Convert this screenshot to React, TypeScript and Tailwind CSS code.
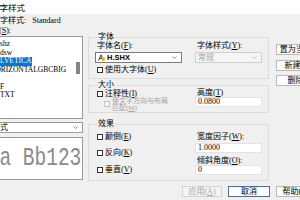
import React from "react";

const ui = "font-['Liberation_Serif','Noto_Sans_CJK_SC',serif]";

function Check({ disabled }: { disabled?: boolean }) {
  return (
    <span
      className={
        disabled
          ? "inline-block w-[6px] h-[6px] shrink-0 border border-[#c4c4c4] bg-[#f7f7f7]"
          : "inline-block w-[6px] h-[6px] shrink-0 border border-[#333333] bg-white"
      }
    />
  );
}

function Arrow({ color = "#707070" }: { color?: string }) {
  return (
    <svg width="5" height="3" viewBox="0 0 5 3" className="shrink-0">
      <polyline points="0.5,0.5 2.5,2.5 4.5,0.5" fill="none" stroke={color} strokeWidth="0.8" />
    </svg>
  );
}

function ShxIcon() {
  return (
    <svg width="7" height="7" viewBox="0 0 7 7" className="shrink-0">
      <path d="M0.5 6.5 L3 0.8 L5.5 6.5 M1.5 4.4 H4.5" fill="none" stroke="#222" strokeWidth="0.9" />
      <path d="M4 3.5 L6.8 3.5 L6.8 6.8 L4 6.8 Z" fill="#f2b705" />
    </svg>
  );
}

function Key({ k }: { k: string }) {
  return <span className="underline underline-offset-[1px]">{k}</span>;
}

const styles = ["HZshz", "HZdsw", "HELVETICA", "HORIZONTALGBCBIG", "HZ", "HZF", "HZTXT", "", ""];

function Btn({ children, w, dim, focus }: { children: React.ReactNode; w: string; dim?: boolean; focus?: boolean }) {
  return (
    <div
      className={[
        "h-[11px] shrink-0 flex items-center justify-center whitespace-nowrap leading-[8px] border",
        w,
        dim ? "border-[#d2d2d2] bg-[#f4f4f4] text-[#a6a6a6]" : "bg-[#fdfdfd] text-black",
        focus ? "border-[#4f6f99]" : dim ? "" : "border-[#b9b9b9]",
      ].join(" ")}
    >
      {children}
    </div>
  );
}

export default function App() {
  return (
    <div className={`w-[300px] h-[200px] overflow-hidden bg-[#f0f0f0] text-[8px] text-black ${ui}`}>
      {/* title bar */}
      <div className="h-[14px] bg-white flex items-center">
        <span className="-ml-[9px] text-[8.5px] leading-[9px] font-['Noto_Sans_CJK_SC',sans-serif]">文字样式</span>
      </div>

      <div className="flex h-[170px]">
        {/* left: styles list + preview */}
        <div className="-ml-[26px] w-[109px] shrink-0 flex flex-col">
          <div className="mt-[3px] ml-[2px] h-[8px] leading-[8px] whitespace-nowrap">
            当前文字样式:&nbsp;&nbsp; Standard
          </div>
          <div className="mt-[2px] ml-[9px] h-[8px] leading-[8px] whitespace-nowrap">
            样式(<Key k="S" />):
          </div>
          <div className="mt-[1px] ml-[8px] h-[83px] bg-white border border-[#9a9a9a] flex text-[7.5px]">
            <div className="flex-1 pt-[3px] pl-[6px] flex flex-col items-start">
              {styles.map((s, i) => (
                <div
                  key={i}
                  className={
                    s === "HELVETICA"
                      ? "h-[8.5px] leading-[8.5px] px-[1px] whitespace-nowrap bg-[#0078d7] text-white"
                      : "h-[8.5px] leading-[8.5px] px-[1px] whitespace-nowrap"
                  }
                >
                  {s}
                </div>
              ))}
            </div>
            <div className="w-[7px] pt-[25px] pl-[1px]">
              <div className="w-[4px] h-[12px] bg-[#858585]" />
            </div>
          </div>
          <div className="mt-[3px] h-[11px] bg-white border border-[#9a9a9a] flex items-center pl-[1px] pr-[4px]">
            <span className="leading-[8px] whitespace-nowrap">所有样式</span>
            <span className="ml-auto">
              <Arrow />
            </span>
          </div>
          <div className="mt-[4px] ml-[8px] h-[43px] bg-white border border-[#9a9a9a] overflow-hidden">
            <div className="pt-[8px] pl-[6px] origin-left scale-x-[0.78] whitespace-pre text-[25px] leading-[25px] text-[#8a8a8a] font-['Liberation_Mono',monospace]">
              Aa Bb123
            </div>
          </div>
        </div>

        {/* middle: groups */}
        <div className="ml-[5px] w-[181px] shrink-0 flex flex-col">
          <fieldset className="mt-[19px] h-[46px] border border-[#dcdcdc] px-[6px]">
            <legend className="ml-[2px] px-[1px] leading-[8px]">字体</legend>
            <div className="grid grid-cols-[87px_67px] gap-x-[13px]">
              <div className="mt-[1px] leading-[8px] pl-[2px] whitespace-nowrap">
                字体名(<Key k="F" />):
              </div>
              <div className="mt-[1px] leading-[8px] pl-[2px] whitespace-nowrap">
                字体样式(<Key k="Y" />):
              </div>
              <div className="mt-[2px] h-[11px] bg-white border border-[#7a7a7a] flex items-center pl-[2px] pr-[4px] gap-[2px]">
                <ShxIcon />
                <span className="font-['Liberation_Sans',sans-serif] font-bold text-[7.5px] leading-[8px]">H.SHX</span>
                <span className="ml-auto">
                  <Arrow />
                </span>
              </div>
              <div className="mt-[2px] h-[11px] bg-[#f5f5f5] border border-[#cfcfcf] flex items-center pl-[2px] pr-[4px] text-[#a3a3a3]">
                <span className="leading-[8px]">常规</span>
                <span className="ml-auto">
                  <Arrow color="#b5b5b5" />
                </span>
              </div>
              <div className="mt-[3px] flex items-center gap-[2px] pl-[2px] whitespace-nowrap">
                <Check />
                <span className="leading-[8px]">
                  使用大字体(<Key k="U" />)
                </span>
              </div>
            </div>
          </fieldset>

          <fieldset className="mt-[2px] h-[32px] border border-[#dcdcdc] px-[6px]">
            <legend className="ml-[2px] px-[1px] leading-[8px]">大小</legend>
            <div className="grid grid-cols-[87px_67px] gap-x-[13px]">
              <div className="flex flex-col">
                <div className="mt-[1px] flex items-center gap-[2px] pl-[2px] whitespace-nowrap">
                  <Check />
                  <span className="leading-[8px]">
                    注释性(<Key k="I" />)
                  </span>
                </div>
                <div className="flex items-start gap-[2px] pl-[9px] text-[#a3a3a3]">
                  <span className="mt-[1px]">
                    <Check disabled />
                  </span>
                  <span className="leading-[7px] text-[7px]">
                    使文字方向与布局
                    <br />
                    匹配(<Key k="M" />)
                  </span>
                </div>
              </div>
              <div className="flex flex-col">
                <div className="leading-[8px] pl-[2px] whitespace-nowrap">
                  高度(<Key k="T" />)
                </div>
                <div className="h-[10px] bg-white border border-[#e3e3e3] flex items-center pl-[2px] leading-[8px]">
                  0.0800
                </div>
              </div>
            </div>
          </fieldset>

          <fieldset className="mt-[7px] h-[61px] border border-[#dcdcdc] px-[6px]">
            <legend className="ml-[2px] px-[1px] leading-[8px]">效果</legend>
            <div className="grid grid-cols-[87px_67px] gap-x-[13px]">
              <div className="flex flex-col pl-[2px]">
                <div className="mt-[5px] flex items-center gap-[2px]">
                  <Check />
                  <span className="leading-[8px]">
                    颠倒(<Key k="E" />)
                  </span>
                </div>
                <div className="mt-[8px] flex items-center gap-[2px]">
                  <Check />
                  <span className="leading-[8px]">
                    反向(<Key k="K" />)
                  </span>
                </div>
                <div className="mt-[9px] flex items-center gap-[2px]">
                  <Check />
                  <span className="leading-[8px]">
                    垂直(<Key k="V" />)
                  </span>
                </div>
              </div>
              <div className="flex flex-col">
                <div className="mt-[5px] leading-[8px] pl-[2px] whitespace-nowrap">
                  宽度因子(<Key k="W" />):
                </div>
                <div className="mt-[2px] h-[10px] bg-white border border-[#e3e3e3] flex items-center pl-[2px] leading-[8px]">
                  1.0000
                </div>
                <div className="mt-[4px] leading-[8px] pl-[2px] whitespace-nowrap">
                  倾斜角度(<Key k="O" />):
                </div>
                <div className="h-[10px] bg-white border border-[#e3e3e3] flex items-center pl-[2px] leading-[8px]">
                  0
                </div>
              </div>
            </div>
          </fieldset>
        </div>

        {/* right: buttons */}
        <div className="ml-[7px] flex flex-col">
          <div className="mt-[30px]">
            <Btn w="w-[50px]">置为当前(<Key k="C" />)</Btn>
          </div>
          <div className="mt-[5px]">
            <Btn w="w-[50px]">新建(<Key k="N" />)...</Btn>
          </div>
          <div className="mt-[4px]">
            <Btn w="w-[50px]">删除(<Key k="D" />)</Btn>
          </div>
        </div>
      </div>

      {/* bottom buttons */}
      <div className="mt-[2px] pl-[182px] flex gap-[6px]">
        <Btn w="w-[40px]" dim>
          应用(<Key k="A" />)
        </Btn>
        <Btn w="w-[42px]" focus>
          取消
        </Btn>
        <Btn w="w-[40px]">
          帮助(<Key k="H" />)
        </Btn>
      </div>
    </div>
  );
}
